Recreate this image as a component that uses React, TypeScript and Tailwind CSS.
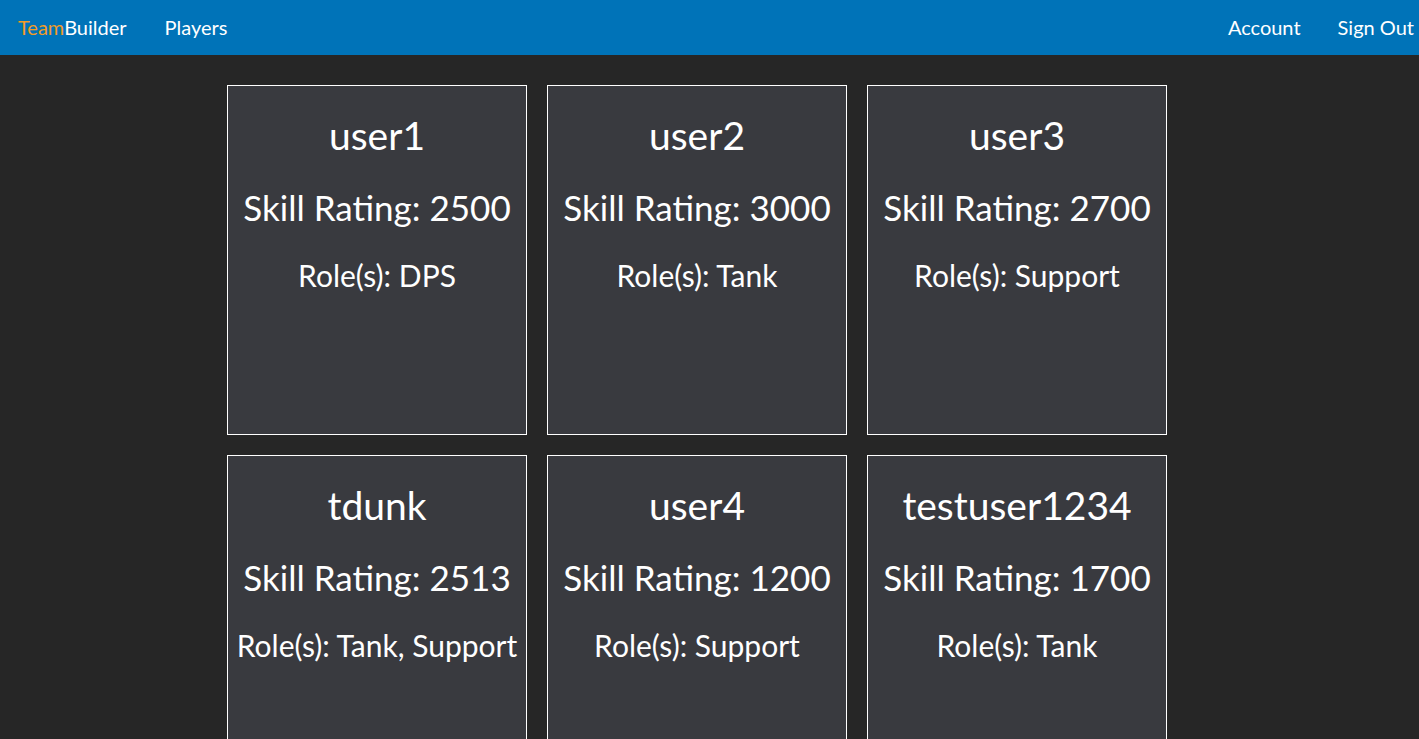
import React from 'react';

type Player = {
  name: string;
  rating: number;
  roles: string;
};

const players: Player[] = [
  { name: 'user1', rating: 2500, roles: 'DPS' },
  { name: 'user2', rating: 3000, roles: 'Tank' },
  { name: 'user3', rating: 2700, roles: 'Support' },
  { name: 'tdunk', rating: 2513, roles: 'Tank, Support' },
  { name: 'user4', rating: 1200, roles: 'Support' },
  { name: 'testuser1234', rating: 1700, roles: 'Tank' },
];

function PlayerCard({ player }: { player: Player }) {
  return (
    <div className="w-[300px] h-[350px] border border-white bg-[#393a3f] flex flex-col items-center text-white text-center">
      <h2 className="mt-[28px] text-[39px] leading-[42px]">{player.name}</h2>
      <p className="mt-[31px] text-[35px] leading-[40px]">Skill Rating: {player.rating}</p>
      <p className="mt-[31px] text-[30px] leading-[34px]">Role(s): {player.roles}</p>
    </div>
  );
}

function App() {
  return (
    <div className="min-h-screen bg-[#262626] font-['Lato','Liberation_Sans',sans-serif]">
      <nav className="h-[55px] bg-[#0073b8] flex items-center justify-between pl-[18px] pr-[5px] pb-[1px] text-white text-[20px]">
        <div className="flex items-center gap-[38px]">
          <span>
            <span className="text-[#f39c27]">Team</span>Builder
          </span>
          <span>Players</span>
        </div>
        <div className="flex items-center gap-[37px]">
          <span>Account</span>
          <span>Sign Out</span>
        </div>
      </nav>

      <main className="pl-[227px] pt-[30px] pb-[20px]">
        <div className="w-[940px] grid grid-cols-3 gap-[20px]">
          {players.map((p) => (
            <PlayerCard key={p.name} player={p} />
          ))}
        </div>
      </main>
    </div>
  );
}

export default App;
